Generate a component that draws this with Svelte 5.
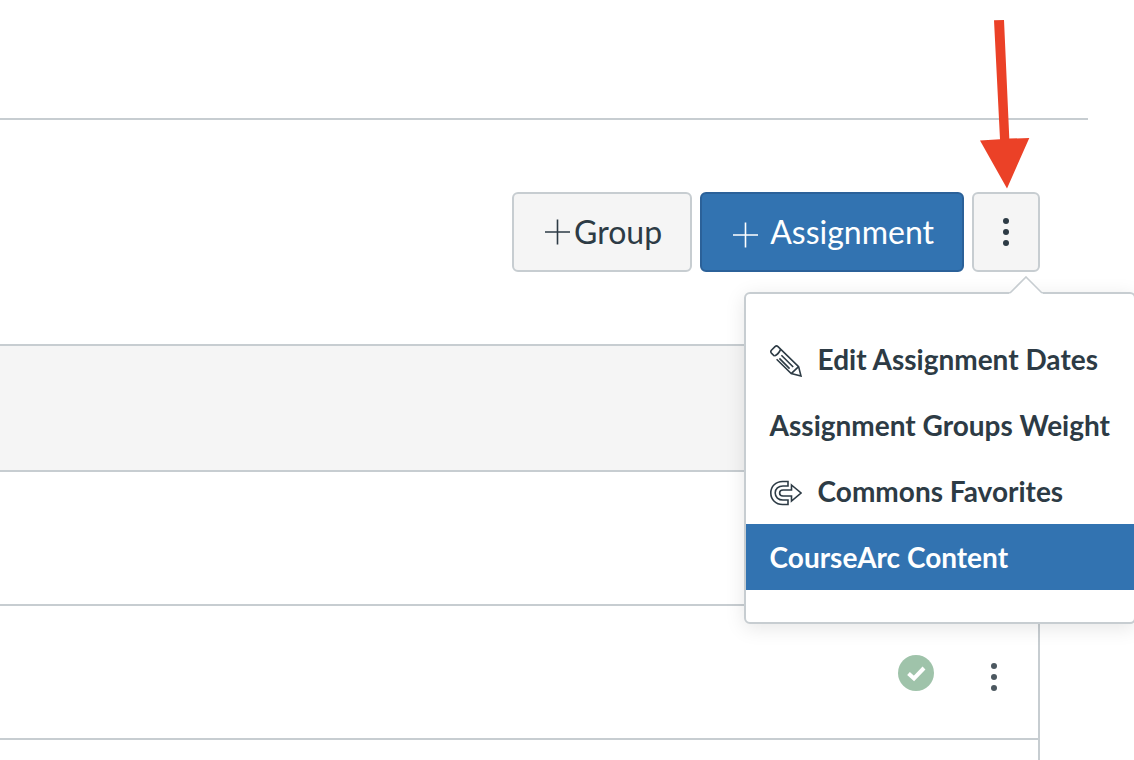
<script>
  const menuItems = [
    { label: 'Edit Assignment Dates', icon: 'pencil' },
    { label: 'Assignment Groups Weight' },
    { label: 'Commons Favorites', icon: 'commons' },
    { label: 'CourseArc Content' }
  ]

  let menuOpen = true
  let active = 'CourseArc Content'
</script>

<div class="page">
  <header class="top-bar"></header>

  <div class="toolbar">
    <button class="btn" aria-label="Add Group">
      <svg class="plus" viewBox="0 0 26 26" aria-hidden="true">
        <path d="M1 13H26M13.5 0.5V25.5" />
      </svg>
      <span class="group-label">Group</span>
    </button>
    <button class="btn primary" aria-label="Add Assignment">
      <svg class="plus low" viewBox="0 0 26 26" aria-hidden="true">
        <path d="M1 13H26M13.5 0.5V25.5" />
      </svg>
      <span>Assignment</span>
    </button>
    <div class="settings">
      <button class="btn more" aria-label="Assignment settings" aria-expanded={menuOpen} on:click={() => (menuOpen = !menuOpen)}>
        <svg class="dots" viewBox="0 0 8 30" aria-hidden="true">
          <circle cx="4" cy="4" r="3" />
          <circle cx="4" cy="15" r="3" />
          <circle cx="4" cy="26" r="3" />
        </svg>
      </button>

      <svg class="callout" viewBox="0 0 50 168" aria-hidden="true">
        <path d="M14 0.3L24 0L29.3 118.6L49.3 118L27 168.4L0 120.4L20 119.3Z" />
      </svg>

      {#if menuOpen}
        <div class="menu">
          <svg class="pointer" viewBox="0 0 36 18" aria-hidden="true">
            <path class="fill" d="M1 18L18 1L35 18Z" />
            <path class="edge" d="M2 17L18 1L34 17" />
          </svg>
          <ul>
            {#each menuItems as item}
              <li>
                <a href="#menu" class:active={item.label === active} on:mouseenter={() => (active = item.label)}>
                  {#if item.icon === 'pencil'}
                    <svg class="icon" viewBox="0 0 32 32" aria-hidden="true">
                      <path d="M4.3 11L1.4 8.1Q0.2 6.6 1.4 5.2L5 1.6Q6.5 0.2 8 1.6L28.6 21.6L31 31L21.2 28.6L6.6 14.2" />
                      <path d="M4.3 11Q8.6 9.4 10.6 4.4M21.2 28.6L28.6 21.6M11.4 10.2L23.2 22M9.4 13.4L19.6 23.6" />
                    </svg>
                  {:else if item.icon === 'commons'}
                    <svg class="icon" viewBox="0 0 32 32" aria-hidden="true">
                      <path d="M18 4.5H12.5C5.8 4.5 0.8 9.4 0.8 16S5.8 27.5 12.5 27.5H18V23H13C8.4 23 5.2 20.1 5.2 16S8.4 9 13 9H18Z" />
                      <path d="M21.5 8L31 16L21.5 24V19H13C11.1 19 9.6 17.7 9.6 16S11.1 13 13 13H21.5Z" />
                    </svg>
                  {/if}
                  <span>{item.label}</span>
                </a>
              </li>
            {/each}
          </ul>
        </div>
      {/if}
    </div>
  </div>

  <div class="groups">
    <div class="group-header"></div>
    <div class="row"></div>
    <div class="row">
      <button class="plain" aria-label="Published">
        <svg class="published" viewBox="0 0 36 36" aria-hidden="true">
          <circle cx="18" cy="18" r="18" />
          <path d="M10.5 18.5L16 23.5L26 13" />
        </svg>
      </button>
      <button class="plain row-more" aria-label="Manage assignment">
        <svg class="dots" viewBox="0 0 8 30" aria-hidden="true">
          <circle cx="4" cy="4" r="3" />
          <circle cx="4" cy="15" r="3" />
          <circle cx="4" cy="26" r="3" />
        </svg>
      </button>
    </div>
    <div class="row"></div>
  </div>
</div>

<style>
  :global(body) {
    background: #fff;
  }

  .page {
    box-sizing: border-box;
    height: 100vh;
    overflow: hidden;
    color: #2d3b45;
    font-family: Lato, "Open Sans", sans-serif;
  }

  .top-bar {
    height: 118px;
    margin-right: 46px;
    border-bottom: 2px solid #c7cdd1;
  }

  .toolbar {
    display: flex;
    justify-content: flex-end;
    gap: 8px;
    padding: 72px 94px 72px 0;
  }

  .btn {
    display: flex;
    align-items: center;
    justify-content: center;
    box-sizing: border-box;
    height: 80px;
    padding: 0 28px 0 30px;
    border: 2px solid #c7cdd1;
    border-radius: 6px;
    background: #f5f5f5;
    color: #2d3b45;
    font-family: inherit;
    font-size: 32px;
    line-height: 40px;
    cursor: pointer;
  }

  .btn.primary {
    gap: 12px;
    border-color: #2b6199;
    background: #3273b1;
    color: #fff;
  }

  .group-label {
    margin-left: 4px;
  }

  .plus {
    width: 26px;
    height: 26px;
    fill: none;
    stroke: currentColor;
    stroke-width: 1.6;
  }

  .plus.low {
    margin-top: 6px;
  }

  .settings {
    position: relative;
  }

  .btn.more {
    width: 68px;
    padding: 0;
  }

  .dots {
    display: block;
    width: 8px;
    height: 30px;
    fill: currentColor;
  }

  .callout {
    position: absolute;
    left: 8px;
    bottom: calc(100% + 4px);
    width: 50px;
    height: 168px;
    overflow: visible;
    fill: #eb4127;
  }

  .menu {
    position: absolute;
    z-index: 1;
    top: calc(100% + 20px);
    right: -96px;
    padding: 32px 0;
    border: 2px solid #c7cdd1;
    border-radius: 6px;
    background: #fff;
    box-shadow: 0 4px 20px rgba(0, 0, 0, 0.1);
  }

  .menu ul {
    margin: 0;
    padding: 0;
    list-style: none;
  }

  .menu a {
    display: flex;
    align-items: center;
    gap: 16px;
    height: 66px;
    padding: 0 24px;
    color: #2d3b45;
    font-size: 28px;
    font-weight: 700;
    line-height: 40px;
    text-decoration: none;
    white-space: nowrap;
  }

  .menu a.active {
    background: #3273b1;
    color: #fff;
  }

  .pointer {
    position: absolute;
    right: 90px;
    bottom: 100%;
    width: 36px;
    height: 18px;
  }

  .pointer .fill {
    fill: #fff;
  }

  .pointer .edge {
    fill: none;
    stroke: #c7cdd1;
    stroke-width: 1.6;
  }

  .icon {
    width: 32px;
    height: 32px;
    margin-top: 4px;
    fill: none;
    stroke: currentColor;
    stroke-width: 1.6;
  }

  .groups {
    margin-right: 94px;
    border-top: 2px solid #c7cdd1;
    border-right: 2px solid #c7cdd1;
  }

  .group-header {
    height: 124px;
    border-bottom: 2px solid #c7cdd1;
    background: #f5f5f5;
  }

  .row {
    display: flex;
    align-items: center;
    justify-content: flex-end;
    gap: 56px;
    height: 132px;
    padding-right: 40px;
    border-bottom: 2px solid #c7cdd1;
  }

  .plain {
    padding: 2px 0 0;
    border: 0;
    background: none;
    color: #4c5860;
    cursor: pointer;
  }

  .row-more {
    padding-top: 10px;
  }

  .published {
    display: block;
    width: 36px;
    height: 36px;
    fill: #9fc3aa;
  }

  .published path {
    fill: none;
    stroke: #fff;
    stroke-width: 4;
  }
</style>
